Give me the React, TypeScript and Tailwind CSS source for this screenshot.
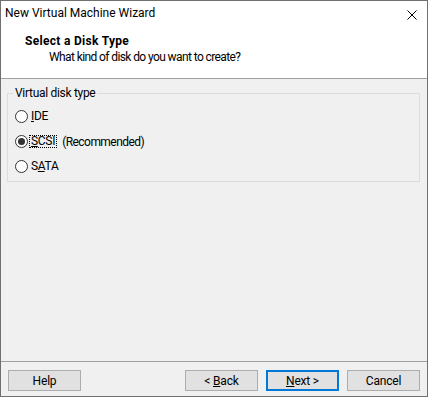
import React, { useState } from 'react';

const options = [
  { id: 'ide', pre: '', key: 'I', post: 'DE', note: '' },
  { id: 'scsi', pre: '', key: 'S', post: 'CSI', note: '(Recommended)' },
  { id: 'sata', pre: 'S', key: 'A', post: 'TA', note: '' },
];

const Radio: React.FC<{ checked: boolean }> = ({ checked }) => (
  <span className="w-[13px] h-[13px] rounded-full border border-[#333] bg-white flex items-center justify-center shrink-0">
    {checked && <span className="w-[7px] h-[7px] rounded-full bg-[#333]" />}
  </span>
);

const btn = 'w-[73px] h-[21px] bg-[#e1e1e1] border border-[#adadad] leading-none';

const App: React.FC = () => {
  const [disk, setDisk] = useState('scsi');

  return (
    <div className="w-[428px] h-[397px] border border-[#707070] bg-[#f0f0f0] flex flex-col text-[12px] leading-[16px] text-black font-['Roboto','Liberation_Sans',sans-serif]">
      {/* title bar */}
      <div className="h-[29px] bg-white flex items-start justify-between pl-[4px] pr-[10px] pt-[4px]">
        <span>New Virtual Machine Wizard</span>
        <svg width="10" height="10" viewBox="0 0 10 10" className="mt-[5px]">
          <path d="M0.5 0.5 L9.5 9.5 M9.5 0.5 L0.5 9.5" stroke="#000" strokeWidth="1" />
        </svg>
      </div>

      {/* header */}
      <div className="h-[49px] bg-white border-b border-[#a0a0a0] pl-[24px] pt-[3px]">
        <div className="font-bold tracking-[0.3px]">Select a Disk Type</div>
        <div className="pl-[24px] tracking-[-0.6px]">What kind of disk do you want to create?</div>
      </div>

      {/* body */}
      <div className="flex-1 pl-[6px] pr-[7px] pt-[7px]">
        <fieldset className="border border-[#dcdcdc] h-[96px] pl-[7px] pr-[7px] pt-[10px] tracking-[-0.3px]">
          <legend className="-ml-[2px] px-[2px] leading-[14px]">Virtual disk type</legend>
          <div className="flex flex-col gap-[12px]">
            {options.map(o => (
              <label key={o.id} className="flex items-center gap-[1px] h-[13px] cursor-default" onClick={() => setDisk(o.id)}>
                <Radio checked={disk === o.id} />
                <span className={`px-[1px] leading-[11px] border border-dotted ${disk === o.id ? 'border-black' : 'border-transparent'}`}>
                  {o.pre}<span className="underline underline-offset-1">{o.key}</span>{o.post}
                </span>
                {o.note && <span className="ml-[4px] tracking-[-0.55px]">{o.note}</span>}
              </label>
            ))}
          </div>
        </fieldset>
      </div>

      {/* footer */}
      <div className="h-[35px] border-t border-[#a0a0a0] flex items-start pt-[8px] pl-[7px] pr-[7px] tracking-[-0.2px]">
        <button className={btn}>Help</button>
        <div className="ml-auto flex gap-[8px]">
          <button className={btn}>
            &lt; <span className="underline underline-offset-1">B</span>ack
          </button>
          <button className="w-[73px] h-[21px] bg-[#e1e1e1] border-2 border-[#0078d7] leading-none">
            <span className="underline underline-offset-1">N</span>ext &gt;
          </button>
          <button className={btn}>Cancel</button>
        </div>
      </div>
    </div>
  );
};

export default App;
